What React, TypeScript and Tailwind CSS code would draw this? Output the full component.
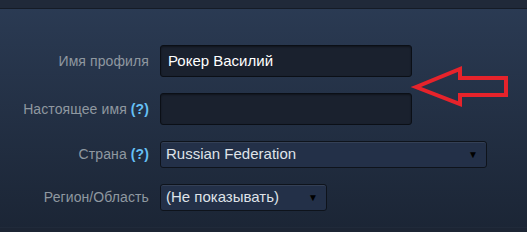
const font = { fontFamily: '"Liberation Sans", Arial, sans-serif' };

function Help() {
  return <span className="text-[#66c0f4] font-bold">(?)</span>;
}

function Label({ children }: { children: React.ReactNode }) {
  return (
    <div className="flex items-center justify-end text-[14px] tracking-[0.1px] text-[#8f98a0] whitespace-nowrap">
      {children}
    </div>
  );
}

function Select({ value, width }: { value: string; width: string }) {
  return (
    <div
      className={`${width} h-[27px] flex items-center justify-between pl-[5px] pr-[8px] rounded-[3px] bg-[#233048] border border-[#0e131b] shadow-[inset_0_1px_0_rgba(255,255,255,0.08)] text-[15px] text-[#dfe3e8]`}
    >
      <span>{value}</span>
      <span className="text-[10px] text-black">▼</span>
    </div>
  );
}

export default function App() {
  return (
    <div
      className="w-[527px] h-[232px] overflow-hidden relative flex flex-col bg-gradient-to-b from-[#2b3b54] to-[#1b2535]"
      style={font}
    >
      {/* top strip */}
      <div className="h-[9px] bg-[#202939] border-b border-[#151b26]" />

      <div className="flex-1 pt-[36px]">
        <div className="grid grid-cols-[149px_auto] gap-x-[11px] gap-y-4 justify-start">
          <Label>Имя профиля</Label>
          <div className="w-[252px] h-[32px] flex items-center px-[7px] rounded-[3px] bg-[#1a212e] border border-[#0b0f16] shadow-[inset_0_1px_2px_rgba(0,0,0,0.4)] text-[15px] text-white">
            Рокер Василий
          </div>

          <Label>
            Настоящее имя&nbsp;<Help />
          </Label>
          <div className="w-[252px] h-[32px] rounded-[3px] bg-[#1a212e] border border-[#0b0f16] shadow-[inset_0_1px_2px_rgba(0,0,0,0.4)]" />

          <Label>
            Страна&nbsp;<Help />
          </Label>
          <Select value="Russian Federation" width="w-[327px]" />

          <Label>Регион/Область</Label>
          <Select value="(Не показывать)" width="w-[167px]" />
        </div>
      </div>

      {/* bottom strip */}
      <div className="h-[5px] bg-[#1c2534] border-t border-[#202a3a]" />

      {/* red annotation arrow */}
      <svg className="absolute left-[410px] top-[64px]" width="104" height="46" viewBox="0 0 104 46">
        <path
          d="M6 23 L50 5 L50 14 L96 14 L96 31 L50 31 L50 40 Z"
          fill="none"
          stroke="#e6232b"
          strokeWidth="4"
          strokeLinejoin="miter"
        />
      </svg>
    </div>
  );
}
